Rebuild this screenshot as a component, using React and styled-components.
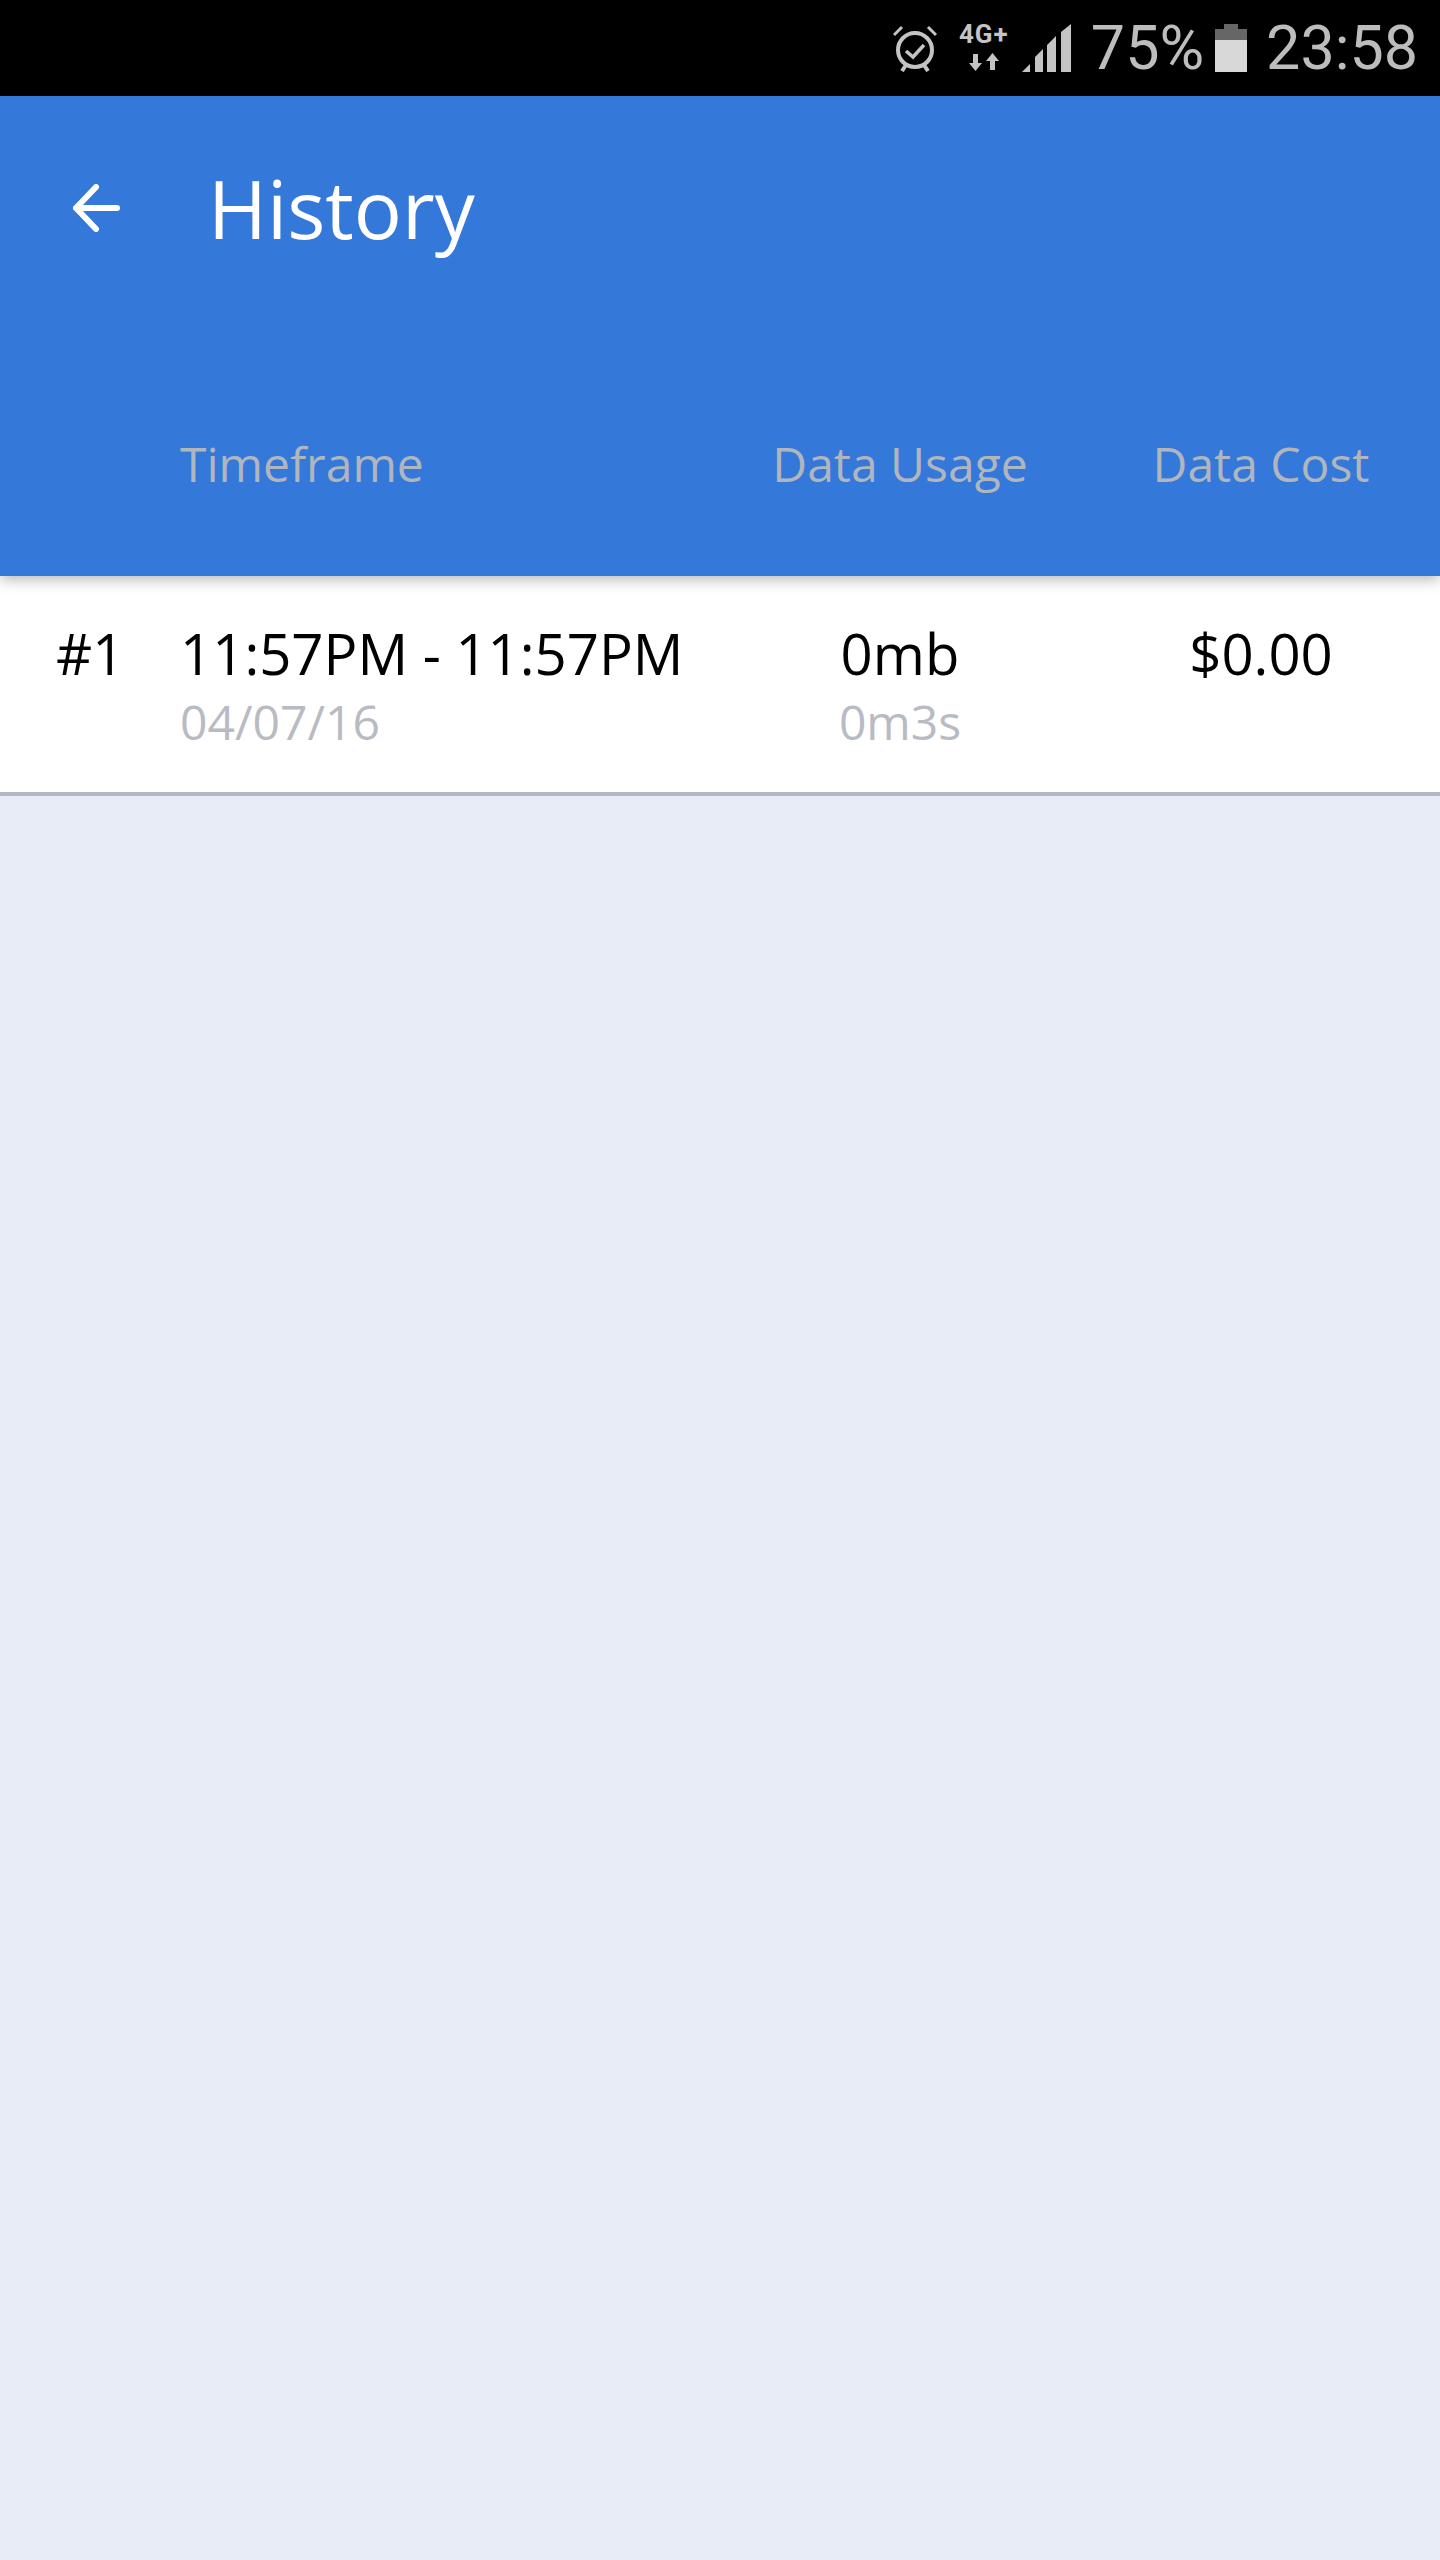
import styled, { createGlobalStyle } from 'styled-components';

const GlobalStyle = createGlobalStyle`
  html, body {
    margin: 0;
    padding: 0;
  }
  body {
    font-family: 'Open Sans', 'Noto Sans', sans-serif;
    background-color: #e8ecf7;
  }
`;

const rows = [
  { id: '#1', time: '11:57PM - 11:57PM', date: '04/07/16', usage: '0mb', duration: '0m3s', cost: '$0.00' },
];

function AlarmIcon() {
  return (
    <StatusSvg width="44" height="48" viewBox="0 0 44 48">
      <circle cx="22" cy="26" r="17" fill="none" stroke="#c4c4c4" strokeWidth="4" />
      <path d="M13 27l7 6 11-12" fill="none" stroke="#c4c4c4" strokeWidth="3.5" />
      <path d="M1 11L9 3M35 3l8 8" fill="none" stroke="#c4c4c4" strokeWidth="3" />
      <path d="M9 47l4-6M35 47l-4-6" fill="none" stroke="#c4c4c4" strokeWidth="4" />
    </StatusSvg>
  );
}

function NetworkIcon() {
  return (
    <NetworkBox>
      <NetworkLabel>4G+</NetworkLabel>
      <svg width="30" height="18" viewBox="0 0 30 18">
        <path d="M4 1h5v9h4l-6.500 8L0 10h4zM21 17h5V8h4l-6.500-8L17 8h4z" fill="#c4c4c4" />
      </svg>
    </NetworkBox>
  );
}

function SignalIcon() {
  return (
    <StatusSvg width="49" height="48" viewBox="0 0 49 48">
      <path d="M0 48l8-8v8zM13 48V33l8-8v23zM25 48V21l9-9v36zM39 48V8l10-8v48z" fill="#c4c4c4" />
    </StatusSvg>
  );
}

function BatteryIcon() {
  return (
    <StatusSvg width="32" height="48" viewBox="0 0 32 48">
      <path d="M9 0h14v5h9v11H0V5h9z" fill="#666" />
      <rect y="16" width="32" height="32" fill="#d8d8d8" />
    </StatusSvg>
  );
}

export default function App() {
  return (
    <>
      <GlobalStyle />
      <Page>
        <StatusBar>
          <AlarmIcon />
          <NetworkIcon />
          <SignalIcon />
          <Percent>75%</Percent>
          <BatteryIcon />
          <Clock>23:58</Clock>
        </StatusBar>
        <Header>
          <TitleRow>
            <BackIcon width="48" height="48" viewBox="0 0 48 48">
              <path d="M45 24H4M24 3L4 24l20 21" fill="none" stroke="#fff" strokeWidth="6" strokeLinecap="round" strokeLinejoin="round" />
            </BackIcon>
            <Title>History</Title>
          </TitleRow>
          <Columns>
            <span />
            <ColumnLabel>Timeframe</ColumnLabel>
            <ColumnLabel $center>Data Usage</ColumnLabel>
            <ColumnLabel $center>Data Cost</ColumnLabel>
          </Columns>
        </Header>
        {rows.map((row) => (
          <Row key={row.id}>
            <Number>{row.id}</Number>
            <Cell>
              <Main>{row.time}</Main>
              <Sub>{row.date}</Sub>
            </Cell>
            <Cell $center>
              <Main>{row.usage}</Main>
              <Sub>{row.duration}</Sub>
            </Cell>
            <Cell $center>
              <Main>{row.cost}</Main>
            </Cell>
          </Row>
        ))}
      </Page>
    </>
  );
}

const Page = styled.div`
  width: 1440px;
  height: 2560px;
  overflow: hidden;
  background-color: #e8ecf7;
`;

const StatusBar = styled.div`
  height: 96px;
  box-sizing: border-box;
  padding: 0 22px 0 0;
  background-color: #000;
  display: flex;
  justify-content: flex-end;
  align-items: center;
`;

const StatusSvg = styled.svg`
  display: block;
  flex: none;
`;

const NetworkBox = styled.div`
  width: 50px;
  height: 46px;
  margin: 0 13px 0 22px;
  display: flex;
  flex-direction: column;
  align-items: center;
  gap: 9px;
`;

const NetworkLabel = styled.div`
  font: 700 26px/19px 'Roboto', sans-serif;
  letter-spacing: 1px;
  color: #c4c4c4;
  white-space: nowrap;
`;

const Percent = styled.div`
  margin: 0 11px 0 20px;
  font: 400 61px/96px 'Roboto', sans-serif;
  color: #bdbdbd;
`;

const Clock = styled.div`
  margin-left: 19px;
  font: 400 61px/96px 'Roboto', sans-serif;
  color: #bdbdbd;
`;

const Header = styled.header`
  position: relative;
  height: 480px;
  background-color: #3478da;
  box-shadow: 0 3px 14px rgba(0, 0, 0, 0.3);
  display: flex;
  flex-direction: column;
`;

const TitleRow = styled.div`
  height: 224px;
  padding-left: 72px;
  display: flex;
  align-items: center;
`;

const BackIcon = styled.svg`
  display: block;
  flex: none;
  margin-right: 88px;
`;

const Title = styled.h1`
  margin: 0;
  font-size: 80px;
  font-weight: 400;
  line-height: 1;
  color: #fff;
`;

const gridColumns = '180px 538px 364px 358px';

const Columns = styled.div`
  display: grid;
  grid-template-columns: ${gridColumns};
  margin-top: 114px;
`;

const ColumnLabel = styled.div`
  font-size: 48px;
  line-height: 60px;
  color: #b1b5bd;
  text-align: ${(p) => (p.$center ? 'center' : 'left')};
`;

const Row = styled.div`
  height: 216px;
  background-color: #fff;
  border-bottom: 4px solid #b4b8c4;
  display: grid;
  grid-template-columns: ${gridColumns};
`;

const Number = styled.div`
  padding: 37px 0 0 56px;
  font-size: 56px;
  line-height: 80px;
  color: #000;
`;

const Cell = styled.div`
  padding-top: 37px;
  text-align: ${(p) => (p.$center ? 'center' : 'left')};
`;

const Main = styled.div`
  font-size: 56.3px;
  line-height: 80px;
  color: #000;
`;

const Sub = styled.div`
  font-size: 48px;
  line-height: 58px;
  color: #b8bbc4;
`;
